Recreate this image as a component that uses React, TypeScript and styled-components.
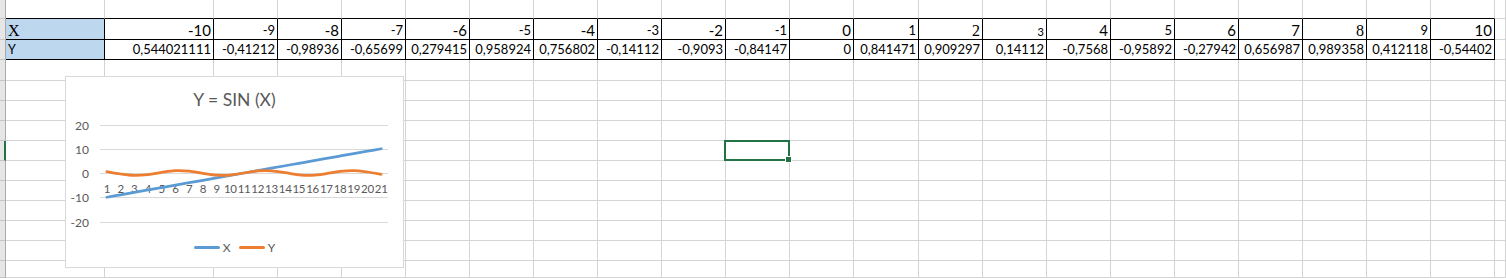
import React from "react";
import styled, { createGlobalStyle, css } from "styled-components";

const GlobalStyle = createGlobalStyle`
  html,
  body {
    margin: 0;
    padding: 0;
    background: #ffffff;
    overflow: hidden;
  }
  body {
    font-family: Lato, "Liberation Sans", sans-serif;
  }
`;

// column widths (px, bottom/right border included): row header, A, B, C..L, M, N..V, then the rest
const COLS = [6, 99, 109, ...Array(10).fill(64), 65, ...Array(9).fill(64)];
const ROWS = [19, 21, 20, 21, ...Array(9).fill(20), 17];
const SELECTED = { row: 7, col: 11 };

const SANS = 'Lato, "Liberation Sans", sans-serif';
const SERIF = '"Liberation Serif", "DejaVu Serif", serif';

type Variant = "N" | "L" | "S" | "F";

const xRow: { v: string; k: Variant }[] = [
  { v: "-10", k: "L" },
  { v: "-9", k: "N" },
  { v: "-8", k: "L" },
  { v: "-7", k: "N" },
  { v: "-6", k: "L" },
  { v: "-5", k: "N" },
  { v: "-4", k: "L" },
  { v: "-3", k: "N" },
  { v: "-2", k: "L" },
  { v: "-1", k: "N" },
  { v: "0", k: "L" },
  { v: "1", k: "N" },
  { v: "2", k: "F" },
  { v: "3", k: "S" },
  { v: "4", k: "L" },
  { v: "5", k: "N" },
  { v: "6", k: "L" },
  { v: "7", k: "L" },
  { v: "8", k: "F" },
  { v: "9", k: "N" },
  { v: "10", k: "L" },
];

const yRow = [
  "0,544021111",
  "-0,41212",
  "-0,98936",
  "-0,65699",
  "0,279415",
  "0,958924",
  "0,756802",
  "-0,14112",
  "-0,9093",
  "-0,84147",
  "0",
  "0,841471",
  "0,909297",
  "0,14112",
  "-0,7568",
  "-0,95892",
  "-0,27942",
  "0,656987",
  "0,989358",
  "0,412118",
  "-0,54402",
];

const SIZE: Record<Variant, number> = { N: 13, L: 15, S: 11, F: 16 };

const Sheet = styled.div`
  position: relative;
  display: grid;
  grid-template-columns: ${COLS.map((w) => `${w}px`).join(" ")} 1fr;
  grid-template-rows: ${ROWS.map((h) => `${h}px`).join(" ")};
  width: 1506px;
  height: 278px;
  overflow: hidden;
  background: #ffffff;
`;

const RowHead = styled.div<{ $active?: boolean }>`
  box-sizing: border-box;
  background: #e6e6e6;
  border-bottom: 1px solid #c4c4c4;
  border-right: ${({ $active }) =>
    $active ? "2px solid #217346" : "1px solid #a9a9a9"};
`;

type CellProps = {
  $table?: boolean;
  $above?: boolean;
  $fill?: string;
  $size?: number;
  $serif?: boolean;
  $left?: boolean;
  $gap?: number;
  $selected?: boolean;
};

const Cell = styled.div<CellProps>`
  position: relative;
  box-sizing: border-box;
  display: flex;
  align-items: flex-end;
  justify-content: ${({ $left }) => ($left ? "flex-start" : "flex-end")};
  padding-left: 2px;
  padding-right: 2px;
  padding-bottom: ${({ $gap = 3, $serif, $size = 13 }) =>
    Math.max(0, $gap - ($serif ? 0.1625 : 0.113) * $size).toFixed(2)}px;
  border-right: 1px solid ${({ $table }) => ($table ? "#000000" : "#d4d4d4")};
  border-bottom: 1px solid
    ${({ $table, $above }) => ($table || $above ? "#000000" : "#d4d4d4")};
  background: ${({ $fill }) => $fill ?? "transparent"};
  font-family: ${({ $serif }) => ($serif ? SERIF : SANS)};
  font-size: ${({ $size = 13 }) => $size}px;
  line-height: 1;
  color: #000000;
  white-space: nowrap;

  ${({ $selected }) =>
    $selected &&
    css`
      z-index: 1;

      &::after {
        content: "";
        position: absolute;
        top: -1px;
        left: -2px;
        right: -1px;
        bottom: -1px;
        border: 2px solid #217346;
        pointer-events: none;
      }

      &::before {
        content: "";
        position: absolute;
        right: -3px;
        bottom: -3px;
        width: 5px;
        height: 5px;
        background: #217346;
        border: 1px solid #ffffff;
        z-index: 2;
      }
    `}
`;

const ChartBox = styled.div`
  position: absolute;
  left: 65px;
  top: 76px;
  width: 339px;
  height: 192px;
  box-sizing: border-box;
  border: 1px solid #d9d9d9;
  background: #ffffff;
  z-index: 3;
  display: flex;
  flex-direction: column;
  font-family: ${SANS};
  color: #595959;
`;

const ChartTitle = styled.div`
  padding-top: 10px;
  height: 26px;
  line-height: 26px;
  text-align: center;
  font-size: 17.5px;
`;

const Plot = styled.svg`
  display: block;
  width: 337px;
  height: 120px;
`;

const Legend = styled.div`
  height: 28px;
  display: flex;
  align-items: center;
  justify-content: center;
  gap: 8px;
  font-size: 12px;
`;

const LegendItem = styled.div`
  display: flex;
  align-items: center;
  gap: 3px;
`;

const Swatch = styled.span<{ $color: string }>`
  display: block;
  width: 26px;
  height: 3px;
  border-radius: 2px;
  background: ${({ $color }) => $color};
`;

const BLUE = "#5b9bd5";
const ORANGE = "#ed7d31";

const PLOT_L = 34;
const PLOT_R = 322;
const ZERO_Y = 60;
const UNIT = 2.425;
const CAT_W = (PLOT_R - PLOT_L) / 21;

const px = (i: number) => PLOT_L + CAT_W / 2 + i * CAT_W;
const py = (v: number) => ZERO_Y - v * UNIT;

const smooth = (pts: [number, number][]) => {
  const f = (n: number) => n.toFixed(2);
  let d = `M${f(pts[0][0])},${f(pts[0][1])}`;
  for (let i = 0; i < pts.length - 1; i++) {
    const p0 = pts[i - 1] ?? pts[i];
    const p1 = pts[i];
    const p2 = pts[i + 1];
    const p3 = pts[i + 2] ?? p2;
    const c1x = p1[0] + (p2[0] - p0[0]) / 6;
    const c1y = p1[1] + (p2[1] - p0[1]) / 6;
    const c2x = p2[0] - (p3[0] - p1[0]) / 6;
    const c2y = p2[1] - (p3[1] - p1[1]) / 6;
    d += ` C${f(c1x)},${f(c1y)} ${f(c2x)},${f(c2y)} ${f(p2[0])},${f(p2[1])}`;
  }
  return d;
};

const SinChart = () => {
  const xPts = xRow.map((c, i) => [px(i), py(Number(c.v))] as [number, number]);
  const yPts = yRow.map(
    (v, i) => [px(i), py(Number(v.replace(",", ".")))] as [number, number]
  );
  const ticks = [20, 10, 0, -10, -20];

  return (
    <ChartBox>
      <ChartTitle>Y = SIN (X)</ChartTitle>
      <Plot viewBox="0 0 337 120">
        {ticks.map((t) => {
          const y = Math.round(py(t)) + 0.5;
          return (
            <g key={t}>
              <line x1={PLOT_L} x2={PLOT_R} y1={y} y2={y} stroke="#d9d9d9" strokeWidth={1} />
              <text
                x={23}
                y={y}
                textAnchor="end"
                dominantBaseline="central"
                fontSize={12}
                fill="#595959"
                fontFamily={SANS}
              >
                {t}
              </text>
            </g>
          );
        })}
        {xRow.map((_, i) => (
          <text
            key={i}
            x={px(i)}
            y={75}
            textAnchor="middle"
            dominantBaseline="central"
            fontSize={11.5}
            letterSpacing={-0.3}
            fill="#595959"
            fontFamily={SANS}
          >
            {i + 1}
          </text>
        ))}
        <path d={smooth(xPts)} fill="none" stroke={BLUE} strokeWidth={2.75} strokeLinecap="round" strokeLinejoin="round" />
        <path d={smooth(yPts)} fill="none" stroke={ORANGE} strokeWidth={2.75} strokeLinecap="round" strokeLinejoin="round" />
      </Plot>
      <Legend>
        <LegendItem>
          <Swatch $color={BLUE} />X
        </LegendItem>
        <LegendItem>
          <Swatch $color={ORANGE} />Y
        </LegendItem>
      </Legend>
    </ChartBox>
  );
};

const renderCell = (row: number, col: number) => {
  const key = `${row}-${col}`;
  const lastTableCol = 22;
  const inTable = (row === 1 || row === 2) && col >= 1 && col <= lastTableCol;
  const above = row === 0 && col >= 1 && col <= lastTableCol;
  const selected = row === SELECTED.row && col === SELECTED.col;

  if (row === 1 && col === 1) {
    return (
      <Cell key={key} $table $fill="#bdd7ee" $left $serif $size={16} $gap={3}>
        X
      </Cell>
    );
  }
  if (row === 2 && col === 1) {
    return (
      <Cell key={key} $table $fill="#bdd7ee" $left $size={12.5} $gap={4}>
        Y
      </Cell>
    );
  }
  if (row === 1 && inTable) {
    const c = xRow[col - 2];
    return (
      <Cell key={key} $table $serif={c.k === "F"} $size={SIZE[c.k]} $gap={3}>
        {c.v}
      </Cell>
    );
  }
  if (row === 2 && inTable) {
    return (
      <Cell key={key} $table $size={13} $gap={4}>
        {yRow[col - 2]}
      </Cell>
    );
  }
  return <Cell key={key} $above={above} $selected={selected} />;
};

export default function App() {
  return (
    <>
      <GlobalStyle />
      <Sheet>
        {ROWS.map((_, row) => (
          <React.Fragment key={row}>
            <RowHead $active={row === SELECTED.row} />
            {Array.from({ length: COLS.length }, (_, i) => renderCell(row, i + 1))}
          </React.Fragment>
        ))}
        <SinChart />
      </Sheet>
    </>
  );
}
